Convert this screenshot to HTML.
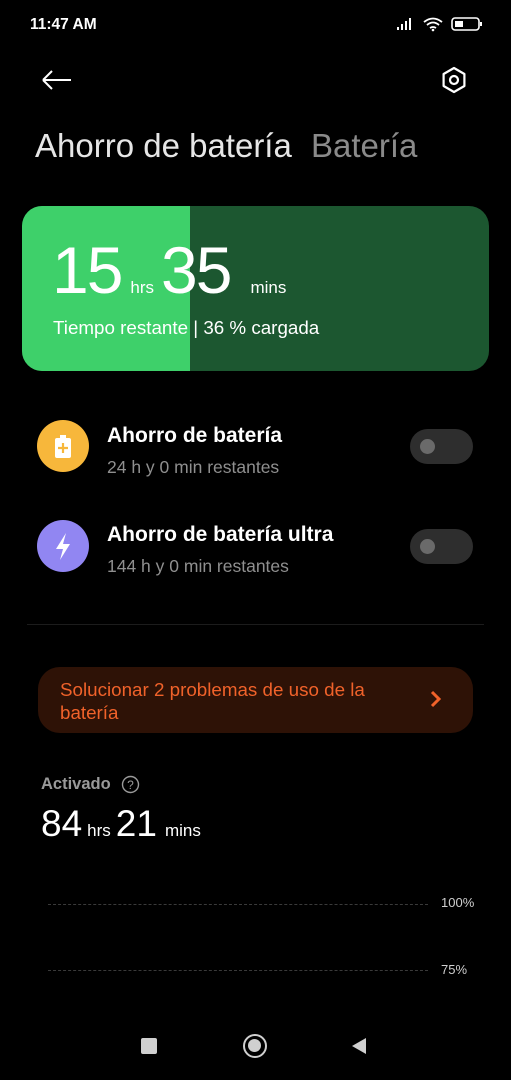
<!DOCTYPE html>
<html><head><meta charset="utf-8"><style>
*{margin:0;padding:0;box-sizing:border-box}
body{width:511px;height:1080px;background:#000;color:#fff;font-family:"Liberation Sans",sans-serif;position:relative;overflow:hidden}
.a{position:absolute;white-space:nowrap}
</style></head><body>
<div class="a" style="left:30px;top:16px;font-size:15.5px;font-weight:bold">11:47 AM</div>
<svg class="a" style="left:396px;top:16px" width="90" height="18">
<rect x="1" y="11" width="2" height="3" fill="#fff"/><rect x="5" y="8" width="2" height="6" fill="#fff"/><rect x="9" y="5" width="2" height="9" fill="#fff"/><rect x="13" y="2" width="2" height="12" fill="#fff"/>
<path d="M28 6 Q37 -1 46 6 M31 9 Q37 4 43 9 M34 12 Q37 10 40 12" stroke="#fff" stroke-width="1.8" fill="none"/><circle cx="37" cy="14" r="1.3" fill="#fff"/>
<rect x="56" y="2" width="27" height="12" rx="3" stroke="#fff" stroke-width="1.6" fill="none"/><rect x="59" y="5" width="8" height="6" fill="#fff"/><rect x="84" y="6" width="2" height="4" fill="#fff"/>
</svg>
<svg class="a" style="left:40px;top:68px" width="34" height="24"><path d="M3 12 H31 M3 12 L12 3 M3 12 L12 21" stroke="#fff" stroke-width="2" fill="none"/></svg>
<svg class="a" style="left:440px;top:66px" width="28" height="28"><path d="M14 2 L24.4 8 V20 L14 26 L3.6 20 V8 Z" stroke="#fff" stroke-width="2.2" fill="none" stroke-linejoin="round"/><circle cx="14" cy="14" r="4" stroke="#fff" stroke-width="2.2" fill="none"/></svg>
<div class="a" style="left:35px;top:127px;font-size:33px;color:#e6e6e6">Ahorro de batería <span style="color:#8a8a8a;margin-left:10px">Batería</span></div>
<div class="a" style="left:22px;top:206px;width:467px;height:165px;border-radius:20px;background:#1c5730;overflow:hidden"><div style="width:168px;height:100%;background:#3ed06a"></div></div>
<div class="a" style="left:52px;top:232px;font-size:66px;letter-spacing:-2px">15<span style="font-size:17px;letter-spacing:0;margin:0 7px 0 9px">hrs</span>35<span style="font-size:17px;letter-spacing:0;margin-left:20px">mins</span></div>
<div class="a" style="left:53px;top:317px;font-size:18.8px">Tiempo restante | 36 % cargada</div>
<div class="a" style="left:37px;top:420px;width:52px;height:52px;border-radius:50%;background:#f7b73b"></div>
<svg class="a" style="left:37px;top:420px" width="52" height="52"><rect x="23" y="15" width="6" height="4" fill="#fff"/><rect x="18" y="18" width="16" height="20" rx="2" fill="#fff"/><path d="M26 23 V33 M21 28 H31" stroke="#f7b73b" stroke-width="2.2"/></svg>
<div class="a" style="left:107px;top:424px;font-size:21px;font-weight:bold">Ahorro de batería</div>
<div class="a" style="left:107px;top:457px;font-size:17.5px;color:#8f8f8f">24 h y 0 min restantes</div>
<div class="a" style="left:410px;top:429px;width:63px;height:35px;border-radius:18px;background:#2e2e2e"><div style="position:absolute;left:10px;top:10px;width:15px;height:15px;border-radius:50%;background:#6a6a6a"></div></div>
<div class="a" style="left:37px;top:520px;width:52px;height:52px;border-radius:50%;background:#9186f2"></div>
<svg class="a" style="left:37px;top:520px" width="52" height="52"><path d="M29 13 L19 29 H26 L23 40 L33 24 H26 Z" fill="#fff"/></svg>
<div class="a" style="left:107px;top:523px;font-size:21px;font-weight:bold">Ahorro de batería ultra</div>
<div class="a" style="left:107px;top:556px;font-size:17.5px;color:#8f8f8f">144 h y 0 min restantes</div>
<div class="a" style="left:410px;top:529px;width:63px;height:35px;border-radius:18px;background:#2e2e2e"><div style="position:absolute;left:10px;top:10px;width:15px;height:15px;border-radius:50%;background:#6a6a6a"></div></div>
<div class="a" style="left:27px;top:624px;width:457px;height:1px;background:#1c1c1c"></div>
<div class="a" style="left:38px;top:667px;width:435px;height:66px;border-radius:22px;background:#2e1206"></div>
<div class="a" style="left:60px;top:678px;font-size:18.8px;color:#f0622a;line-height:23px">Solucionar 2 problemas de uso de la<br>batería</div>
<svg class="a" style="left:428px;top:689px" width="16" height="20"><path d="M4 3 L11 10 L4 17" stroke="#f0622a" stroke-width="3" fill="none"/></svg>
<div class="a" style="left:41px;top:775px;font-size:16.5px;font-weight:bold;color:#9a9a9a">Activado</div>
<svg class="a" style="left:121px;top:775px" width="19" height="19"><circle cx="9.5" cy="9.5" r="8" stroke="#9a9a9a" stroke-width="1.4" fill="none"/><text x="9.5" y="14" font-size="12" fill="#9a9a9a" text-anchor="middle" font-family="Liberation Sans">?</text></svg>
<div class="a" style="left:41px;top:803px;font-size:37px">84<span style="font-size:17px;margin:0 5px">hrs</span>21<span style="font-size:17px;margin-left:8px">mins</span></div>
<div class="a" style="left:48px;top:904px;width:380px;border-top:1px dashed #3a3a3a"></div>
<div class="a" style="left:441px;top:895px;font-size:13px;color:#cfcfcf">100%</div>
<div class="a" style="left:48px;top:970px;width:380px;border-top:1px dashed #3a3a3a"></div>
<div class="a" style="left:441px;top:962px;font-size:13px;color:#cfcfcf">75%</div>
<div class="a" style="left:141px;top:1038px;width:16px;height:16px;background:#d0d0d0;border-radius:2px"></div>
<div class="a" style="left:243px;top:1034px;width:24px;height:24px;border-radius:50%;border:2.5px solid #d0d0d0"><div style="margin:3px;width:13px;height:13px;border-radius:50%;background:#d0d0d0"></div></div>
<svg class="a" style="left:350px;top:1037px" width="18" height="18"><path d="M16 1 V17 L2 9 Z" fill="#d0d0d0"/></svg>
</body></html>
